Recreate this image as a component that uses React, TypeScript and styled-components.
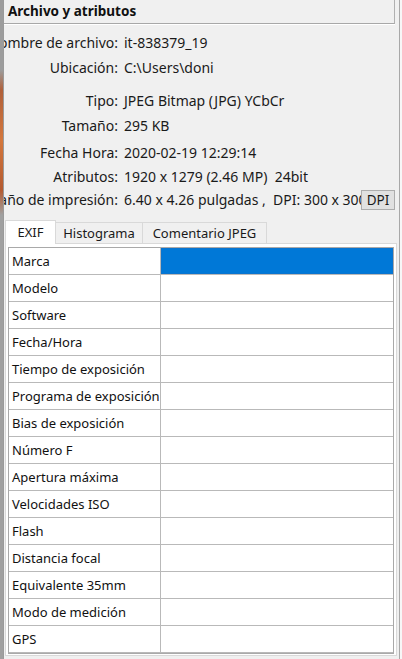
import React from "react";
import styled, { createGlobalStyle } from "styled-components";

const Global = createGlobalStyle`
  html, body { margin: 0; padding: 0; background: #f0f0f0; }
  body { font-family: "Noto Sans", "Open Sans", sans-serif; color: #000; }
  * { box-sizing: border-box; }
`;

const Screen = styled.div`
  display: flex;
  width: 402px;
  height: 659px;
  overflow: hidden;
  background: #f0f0f0;
`;

const DesktopStrip = styled.div`
  width: 3px;
  flex: none;
  background: linear-gradient(
    180deg,
    #9c9c9c 0px,
    #9c9c9c 70px,
    #b0603a 90px,
    #d4773c 140px,
    #b45a30 190px,
    #a0a0a0 215px,
    #a0a0a0 100%
  );
`;

const RightStrip = styled.div`
  width: 2px;
  flex: none;
  background: #f7f7f7;
`;

const Window = styled.div`
  flex: 1;
  min-width: 0;
  display: flex;
  flex-direction: column;
  border-left: 1px solid #9a9a9a;
  border-right: 1px solid #a8a8a8;
  overflow: hidden;
`;

const Header = styled.div`
  height: 24px;
  margin-right: 4px;
  padding-left: 4px;
  padding-bottom: 2px;
  display: flex;
  align-items: center;
  font-size: 13.5px;
  font-weight: 700;
  color: #111;
  border-bottom: 1px solid #a8a8a8;
  border-right: 1px solid #b0b0b0;
  box-shadow: 0 1px 0 #ffffff;
`;

const InfoList = styled.div`
  display: flex;
  flex-direction: column;
  padding-top: 6px;
  font-size: 14px;
`;

const InfoRow = styled.div<{ $gap: number; $h?: number }>`
  display: flex;
  align-items: center;
  height: ${(p) => p.$h ?? 24}px;
  margin-top: ${(p) => p.$gap}px;
`;

const Label = styled.div`
  flex: none;
  width: 114px;
  display: flex;
  justify-content: flex-end;
  white-space: nowrap;
  color: #1a1a1a;
`;

const Value = styled.div`
  flex: 1;
  min-width: 0;
  padding-left: 6px;
  white-space: pre;
  overflow: hidden;
  color: #1a1a1a;
`;

const DpiButton = styled.button`
  flex: none;
  width: 34px;
  height: 20px;
  margin-right: 4px;
  padding: 0;
  font-family: inherit;
  font-size: 13.5px;
  color: #1a1a1a;
  background: #e1e1e1;
  border: 1px solid #adadad;
`;

const TabBar = styled.div`
  display: flex;
  align-items: flex-end;
  height: 24px;
  margin-top: 8px;
  padding-left: 1px;
`;

const Tab = styled.div<{ $w: number; $active?: boolean }>`
  width: ${(p) => p.$w}px;
  height: ${(p) => (p.$active ? 24 : 21)}px;
  display: flex;
  align-items: center;
  justify-content: center;
  font-size: 13px;
  color: #1a1a1a;
  background: ${(p) => (p.$active ? "#ffffff" : "#f0f0f0")};
  border: 1px solid #d9d9d9;
  border-bottom: none;
  margin-left: ${(p) => (p.$active ? 0 : -1)}px;
  position: relative;
  z-index: ${(p) => (p.$active ? 1 : 0)};
  margin-bottom: ${(p) => (p.$active ? -1 : 0)}px;
  padding-bottom: ${(p) => (p.$active ? 2 : 0)}px;
`;

const TabPanel = styled.div`
  flex: 1;
  margin: 0 2px 3px 1px;
  padding: 3px 2px 0 2px;
  background: #ffffff;
  border: 1px solid #d9d9d9;
  display: flex;
  flex-direction: column;
`;

const Table = styled.div`
  display: grid;
  grid-template-columns: 152px 1fr;
  border: 1px solid #a9a9a9;
  background: #ffffff;
`;

const NameCell = styled.div`
  height: 27px;
  padding-left: 3px;
  display: flex;
  align-items: center;
  font-size: 13px;
  color: #111;
  white-space: nowrap;
  overflow: hidden;
  border-right: 1px solid #b9b9b9;
  border-bottom: 1px solid #b9b9b9;
`;

const ValueCell = styled.div<{ $selected?: boolean }>`
  height: 27px;
  background: ${(p) => (p.$selected ? "#0078d7" : "#ffffff")};
  border-bottom: 1px solid #b9b9b9;
  ${(p) => (p.$selected ? "box-shadow: inset 0 0 0 1px #0a74cf;" : "")}
`;

const info = [
  { label: "Nombre de archivo:", value: "it-838379_19", gap: 0 },
  { label: "Ubicación:", value: "C:\\Users\\doni", gap: 1 },
  { label: "Tipo:", value: "JPEG Bitmap (JPG) YCbCr", gap: 9 },
  { label: "Tamaño:", value: "295 KB", gap: 1 },
  { label: "Fecha Hora:", value: "2020-02-19 12:29:14", gap: 3 },
  { label: "Atributos:", value: "1920 x 1279 (2.46 MP)  24bit", gap: 0 },
];

const exif = [
  "Marca",
  "Modelo",
  "Software",
  "Fecha/Hora",
  "Tiempo de exposición",
  "Programa de exposición",
  "Bias de exposición",
  "Número F",
  "Apertura máxima",
  "Velocidades ISO",
  "Flash",
  "Distancia focal",
  "Equivalente 35mm",
  "Modo de medición",
  "GPS",
];

export default function App() {
  return (
    <>
      <Global />
      <Screen>
        <DesktopStrip />
        <Window>
          <Header>Archivo y atributos</Header>
          <InfoList>
            {info.map((r) => (
              <InfoRow key={r.label} $gap={r.gap}>
                <Label>{r.label}</Label>
                <Value>{r.value}</Value>
              </InfoRow>
            ))}
            <InfoRow $gap={0} $h={23}>
              <Label>Tamaño de impresión:</Label>
              <Value>{"6.40 x 4.26 pulgadas ,  DPI: 300 x 300"}</Value>
              <DpiButton>DPI</DpiButton>
            </InfoRow>
          </InfoList>
          <TabBar>
            <Tab $w={51} $active>
              EXIF
            </Tab>
            <Tab $w={88}>Histograma</Tab>
            <Tab $w={125}>Comentario JPEG</Tab>
          </TabBar>
          <TabPanel>
            <Table>
              {exif.map((name, i) => (
                <React.Fragment key={name}>
                  <NameCell>{name}</NameCell>
                  <ValueCell $selected={i === 0} />
                </React.Fragment>
              ))}
            </Table>
          </TabPanel>
        </Window>
        <RightStrip />
      </Screen>
    </>
  );
}
